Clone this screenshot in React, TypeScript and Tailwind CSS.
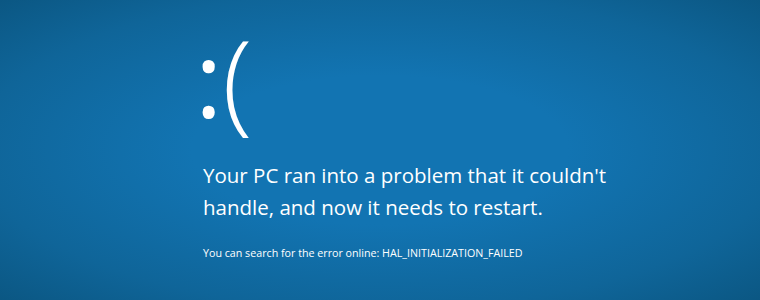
export default function App() {
  return (
    <div className="w-[760px] h-[300px] overflow-hidden bg-[radial-gradient(ellipse_at_center,#1274b2_35%,#0f6599_75%,#0b5783_100%)] text-white font-['Open_Sans',sans-serif]">
      <div className="flex flex-col pl-[203px] pt-[22px]">
        <div className="flex items-start h-[130px] leading-none ml-[-8px]">
          <span className="text-[104px] font-normal mt-[4px]">:</span>
          <span className="text-[111px] font-light">(</span>
        </div>
        <div className="text-[20.5px] leading-[32px] mt-[7px]">
          <p>Your PC ran into a problem that it couldn't</p>
          <p>handle, and now it needs to restart.</p>
        </div>
        <p className="text-[10.7px] mt-[22px]">You can search for the error online: HAL_INITIALIZATION_FAILED</p>
      </div>
    </div>
  );
}
